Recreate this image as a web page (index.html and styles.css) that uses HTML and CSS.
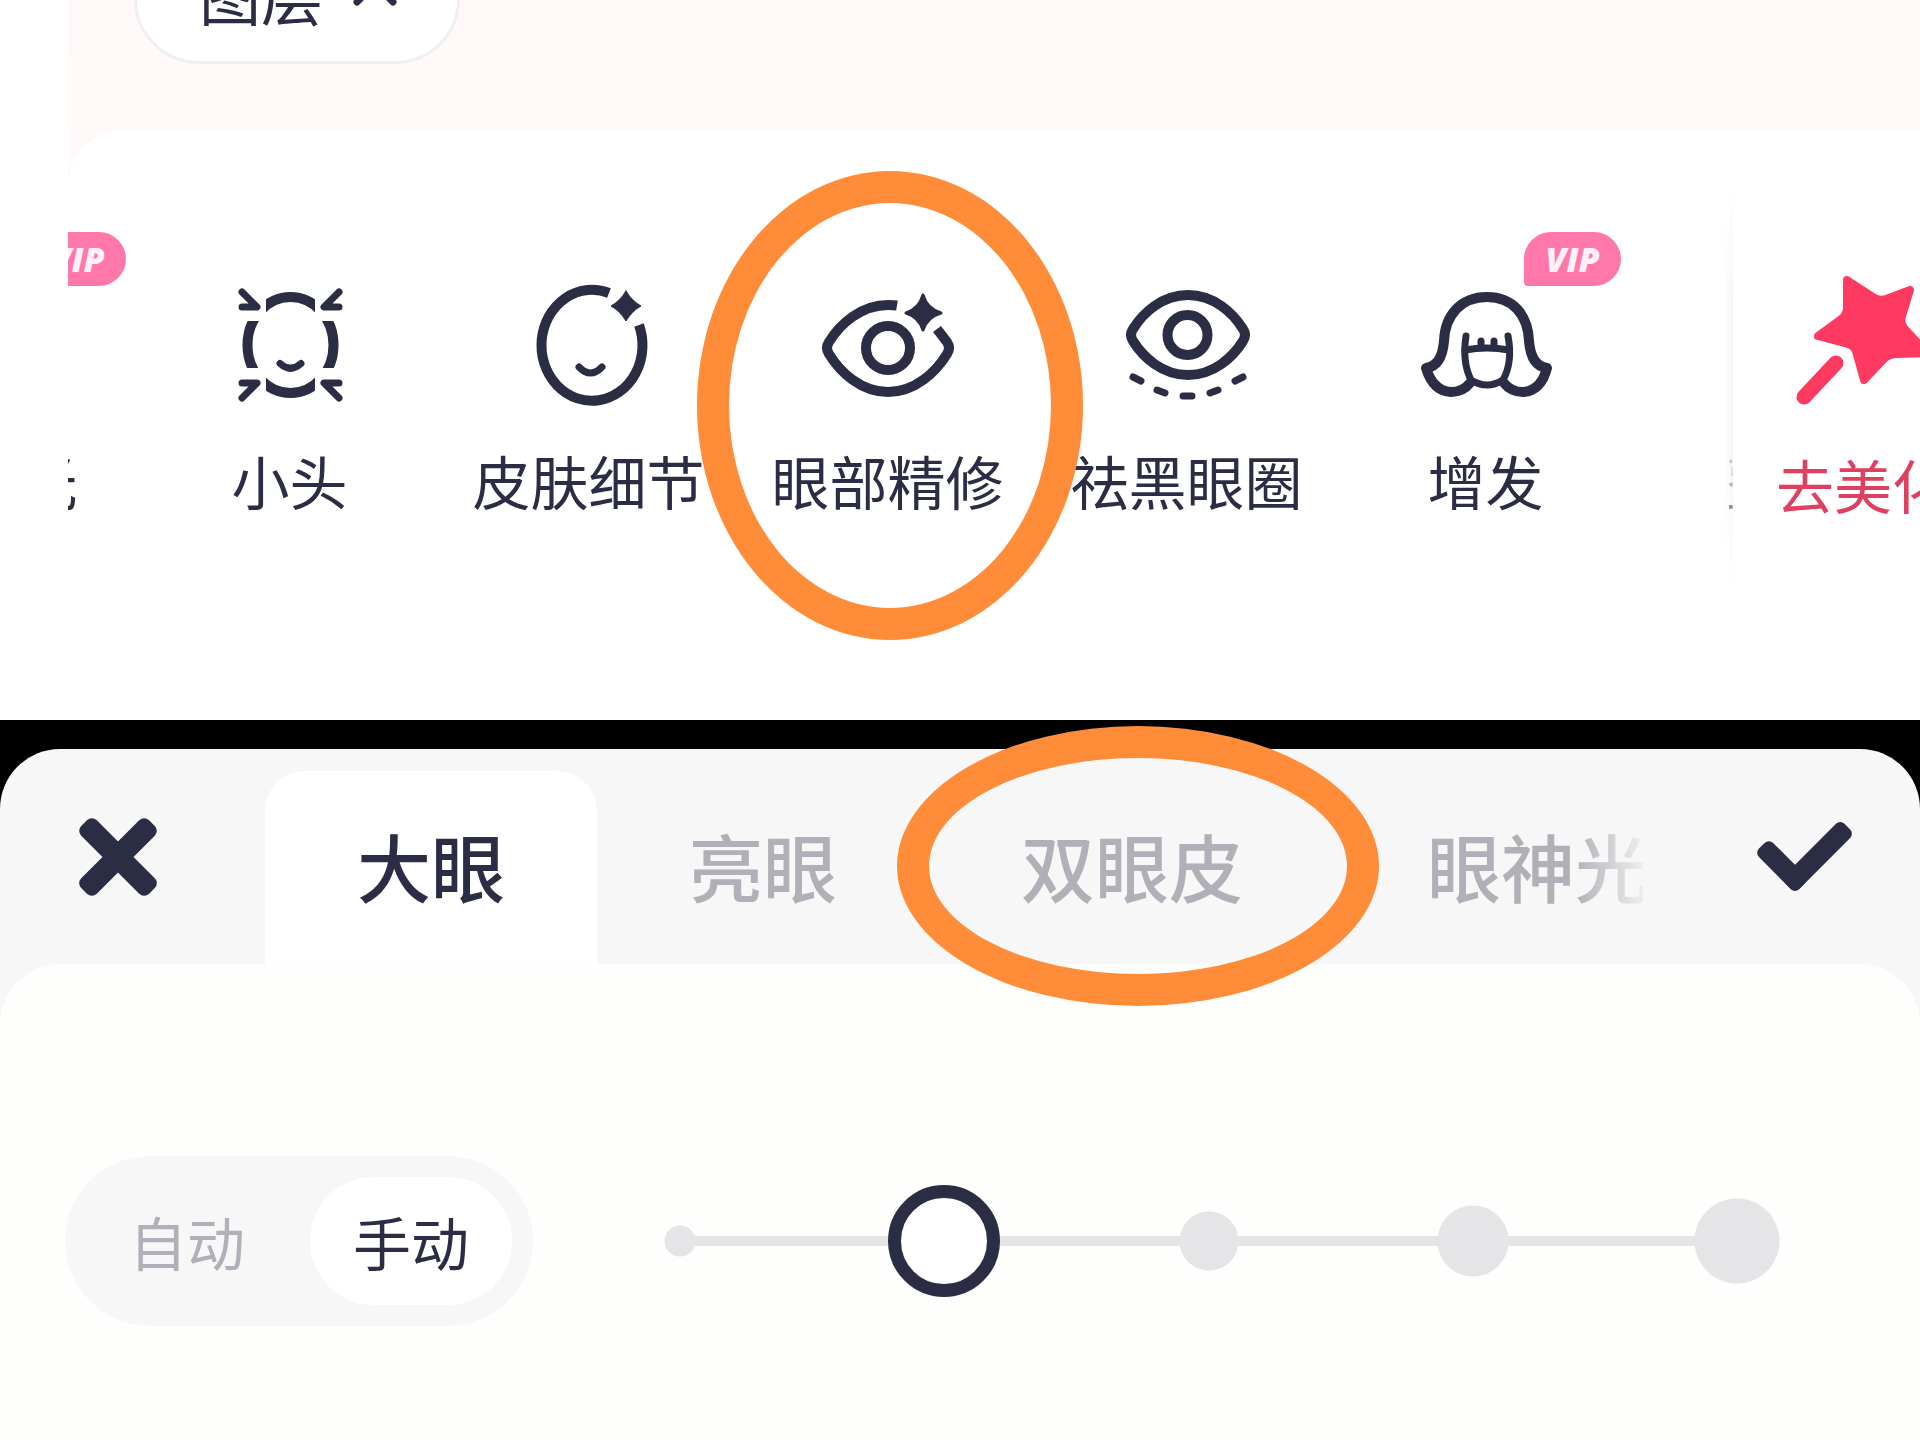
FILE: index.html
```html
<!DOCTYPE html>
<html lang="zh-CN">

<head>

    <meta charset="UTF-8">
    <meta name="viewport" content="width=device-width, initial-scale=1.0">
    <title>眼部精修</title>

    <link rel="stylesheet" href="styles.css">

</head>

<body>

    <section class="editor">
        <button class="layers" type="button">
            <span>图层</span>
            <svg width="44" height="24" viewBox="0 0 44 24"><path d="M4 20L22 2L40 20" /></svg>
        </button>

        <div class="toolbar">
            <div class="tools">
                <button class="tool" type="button">
                    <svg class="icon" viewBox="0 0 140 140"></svg>
                    <span>祛油光</span>
                    <em class="vip">VIP</em>
                </button>

                <button class="tool" type="button">
                    <svg class="icon" viewBox="0 0 140 140">
                        <clipPath id="faceGaps">
                            <rect x="46" y="0" width="49" height="140" />
                            <rect x="0" y="46" width="140" height="47" />
                        </clipPath>
                        <ellipse cx="70.5" cy="70" rx="43" ry="48" stroke-width="10" clip-path="url(#faceGaps)" />
                        <path d="M60 88.5Q70.5 98 81 88.5M22 17L37 32H22M119 17L104 32H119M22 123L37 108H22M119 123L104 108H119" stroke-width="7" />
                    </svg>
                    <span>小头</span>
                </button>

                <button class="tool" type="button">
                    <svg class="icon" viewBox="0 0 140 140">
                        <path class="butt" d="M120 50A50.5 55.5 0 1 1 90 18" stroke-width="10" />
                        <path d="M60 92Q71.5 104 83 92" stroke-width="7" />
                        <path class="solid" d="M107 16Q113 26 122 31Q113 36 107 46Q101 36 92 31Q101 26 107 16Z" stroke-width="1" />
                    </svg>
                    <span>皮肤细节</span>
                </button>

                <button class="tool" type="button">
                    <svg class="icon" viewBox="0 0 140 140">
                        <path class="butt" d="M79 30.5Q76 30 70 30C43 30 22 49 11 67Q7 73 11 79C22 97 43 117 70 117C97 117 118 97 129 79Q133 73 129 67L119 54" stroke-width="10" />
                        <circle cx="70" cy="73" r="22" stroke-width="10" />
                        <path class="solid" d="M105 20Q109 34 123 38Q109 42 105 55Q101 42 88 38Q101 34 105 20Z" stroke-width="3" />
                    </svg>
                    <span>眼部精修</span>
                    <i class="ring ring-tool"></i>
                </button>

                <button class="tool" type="button">
                    <svg class="icon" viewBox="0 0 140 140">
                        <path d="M71 20C97 20 116 38 126 54Q130 60 126 66C116 82 97 100 71 100C45 100 26 82 16 66Q12 60 16 54C26 38 45 20 71 20Z" stroke-width="10" />
                        <circle cx="70.5" cy="60" r="20" stroke-width="10" />
                        <path d="M16 102L24 106M40 115L48 118M66 121H75M93 118L101 115M118 106L126 102" stroke-width="7" />
                    </svg>
                    <span>祛黑眼圈</span>
                </button>

                <button class="tool" type="button">
                    <svg class="icon" viewBox="0 0 140 140">
                        <path d="M54 108Q47 117 35 117Q17 116 10 93Q26 91 28 66C29 40 45 22 71 22C97 22 112 40 113 66Q115 91 131 93Q125 116 107 117Q95 117 88 108" stroke-width="10" />
                        <path d="M50 61Q46 87 55 105Q71 115 87 105Q97 87 92 61" stroke-width="7" />
                        <path d="M49 75Q71 71 93 75M65 66V72M78 66V72" stroke-width="7" />
                    </svg>
                    <span>增发</span>
                    <em class="vip">VIP</em>
                </button>

                <button class="tool" type="button">
                    <svg class="icon" viewBox="0 0 140 140"></svg>
                    <span>整牙</span>
                </button>
            </div>

            <div class="pinned">
                <button class="tool tool-remove" type="button">
                    <svg class="icon" viewBox="0 0 140 140">
                        <path class="solid" d="M54 5L80 22Q86 26 93 24L117 15L109 41Q107 47 111 53L134 78L104 79Q95 79 90 85L71 105L63 76Q61 71 55 69L25 61L47 45Q54 40 54 33Z" stroke-width="8" />
                        <path d="M43 88L11 122" stroke-width="15" />
                    </svg>
                    <span>去美化</span>
                </button>
            </div>
        </div>
    </section>

    <section class="sheet">
        <header class="sheet-head">
            <button class="action action-close" type="button" aria-label="关闭">
                <svg width="100" height="100" viewBox="-50 -50 100 100">
                    <rect x="-11" y="-48" width="22" height="96" rx="7" transform="rotate(45)" />
                    <rect x="-11" y="-48" width="22" height="96" rx="7" transform="rotate(-45)" />
                </svg>
            </button>

            <div class="tabs" role="tablist">
                <button class="tab active" type="button" role="tab" aria-selected="true">大眼</button>
                <button class="tab" type="button" role="tab">亮眼</button>
                <button class="tab" type="button" role="tab">双眼皮<i class="ring ring-tab"></i></button>
                <button class="tab tab-fade" type="button" role="tab">眼神光</button>
            </div>

            <button class="action action-done" type="button" aria-label="完成">
                <svg width="100" height="100" viewBox="0 0 100 100">
                    <rect x="-10" y="-47" width="20" height="57" rx="6" transform="translate(40 72) rotate(-45)" />
                    <rect x="-10" y="-74" width="20" height="84" rx="6" transform="translate(40 72) rotate(45)" />
                </svg>
            </button>
        </header>

        <div class="panel">
            <div class="mode">
                <input type="radio" name="mode" id="modeAuto">
                <label for="modeAuto">自动</label>
                <input type="radio" name="mode" id="modeManual" checked>
                <label for="modeManual">手动</label>
            </div>

            <div class="size">
                <div class="stops">
                    <i class="stop-1"></i>
                    <i class="stop-2"></i>
                    <i class="stop-3"></i>
                    <i class="stop-4"></i>
                    <i class="stop-5"></i>
                </div>
                <input type="range" min="0" max="4" step="1" value="1" aria-label="画笔大小">
            </div>
        </div>
    </section>

</body>

</html>
```
FILE: styles.css
```css
:root {
    --ink: #2b2d45;
    --muted: #b0b1b8;
    --grey: #f7f7f7;
    --track: #e5e5e8;
    --orange: #ff8c39;
    --red: #ff3a60;
}

* {
    box-sizing: border-box;
}

body {
    margin: 0;
    min-height: 100vh;
    display: flex;
    flex-direction: column;
    overflow: hidden;
    background-color: #fff;
    color: var(--ink);
    font-family: "Noto Sans CJK SC", sans-serif;
}

button {
    margin: 0;
    padding: 0;
    border: 0;
    background: none;
    color: inherit;
    font: inherit;
}

svg {
    display: block;
    flex: none;
}

/* top: canvas strip and tools */

.editor {
    margin-left: 68px;
    height: 720px;
    display: flex;
    flex-direction: column;
    align-items: flex-start;
    overflow: hidden;
    background: linear-gradient(#fff8f8, #fffaf9 130px);
}

.layers {
    display: flex;
    align-items: center;
    gap: 30px;
    height: 130px;
    margin: -66px 0 66px 66px;
    padding: 0 60px 10px 62px;
    border: 3px solid #f1eff0;
    border-radius: 65px;
    background-color: #fff;
    font-size: 62px;
    line-height: 72px;
}

.layers svg {
    fill: none;
    stroke: var(--ink);
    stroke-width: 7px;
    stroke-linecap: round;
}

.toolbar {
    width: 100%;
    flex: 1;
    display: flex;
    background-color: #fff;
    border-top-left-radius: 56px;
}

.tools {
    flex: 1;
    min-width: 0;
    display: flex;
    overflow: hidden;
}

.tools .tool:first-child {
    margin-left: -227px;
}

.tool {
    position: relative;
    flex: none;
    width: 299px;
    padding-top: 145px;
    display: flex;
    flex-direction: column;
    align-items: center;
    gap: 29px;
    font-size: 58px;
    line-height: 72px;
    white-space: nowrap;
}

.icon {
    width: 140px;
    height: 140px;
    fill: none;
    stroke: var(--ink);
    stroke-linecap: round;
    stroke-linejoin: round;
}

.icon .butt {
    stroke-linecap: butt;
}

.icon .solid {
    fill: var(--ink);
}

.vip {
    position: absolute;
    top: 102px;
    left: 188px;
    width: 97px;
    height: 54px;
    border-radius: 27px 27px 27px 4px;
    background-color: #ff78a9;
    color: #fff0f8;
    font-family: "Open Sans", sans-serif;
    font-size: 34px;
    font-weight: 800;
    line-height: 54px;
    text-align: center;
}

.pinned {
    position: relative;
    flex: none;
    width: 187px;
}

.pinned:before {
    content: '';
    position: absolute;
    top: 50px;
    bottom: 130px;
    right: 100%;
    width: 8px;
    background: linear-gradient(to right, transparent, #f4f4f4);
    mask-image: linear-gradient(transparent, #000 30%, #000 70%, transparent);
}

.tool-remove {
    width: 260px;
    gap: 33px;
    color: #e0405f;
}

.tool-remove .icon {
    stroke: var(--red);
}

.tool-remove .icon .solid {
    fill: var(--red);
}

/* hand-drawn highlights over a tool or a tab */

.ring {
    position: absolute;
    z-index: 5;
    border: 32px solid var(--orange);
    border-radius: 50%;
    pointer-events: none;
}

.ring-tool {
    top: 41px;
    left: -41px;
    width: 386px;
    height: 469px;
}

.ring-tab {
    top: -45px;
    left: -32px;
    width: 482px;
    height: 280px;
}

.tool:has(.ring) {
    z-index: 2;
}

/* bottom: sheet */

.sheet {
    flex: 1;
    display: flex;
    flex-direction: column;
    padding-top: 29px;
    background-color: #000;
}

.sheet-head {
    position: relative;
    z-index: 2;
    display: flex;
    height: 215px;
    background-color: var(--grey);
    border-radius: 60px 60px 0 0;
}

.action {
    flex: none;
    display: flex;
    align-items: center;
    fill: var(--ink);
}

.action-close {
    width: 265px;
    padding-left: 68px;
}

.action-done {
    width: 277px;
    padding-right: 65px;
    justify-content: flex-end;
}

.tabs {
    flex: 1;
    min-width: 0;
    display: flex;
    align-items: flex-end;
    overflow-x: clip;
}

.tab {
    position: relative;
    flex: none;
    height: 193px;
    padding: 0 92px 6px;
    color: var(--muted);
    font-size: 74px;
    font-weight: 500;
    line-height: 96px;
}

.tab.active {
    color: var(--ink);
    background-color: #fff;
    border-radius: 40px 40px 0 0;
}

.tab-fade {
    mask-image: linear-gradient(to right, #000 240px, transparent 318px);
}

.panel {
    flex: 1;
    display: flex;
    align-items: flex-start;
    gap: 91px;
    padding: 192px 127px 114px 65px;
    background-color: #fefefc;
    border-radius: 60px 60px 0 0;
    box-shadow: 0 -60px 0 60px var(--grey);
    clip-path: inset(0);
}

.mode {
    flex: none;
    display: flex;
    gap: 22px;
    padding: 21px;
    border-radius: 85px;
    background-color: var(--grey);
}

.mode input {
    position: absolute;
    opacity: 0;
}

.mode label {
    padding: 0 43px;
    border-radius: 64px;
    color: var(--muted);
    font-size: 58px;
    line-height: 128px;
}

.mode input:checked + label {
    background-color: #fff;
    color: var(--ink);
}

.size {
    flex: 1;
    display: grid;
    align-items: center;
    height: 170px;
}

.stops,
.size input {
    grid-area: 1 / 1;
    margin: 0;
    width: 100%;
}

.stops {
    display: flex;
    align-items: center;
    justify-content: space-between;
    background: linear-gradient(var(--track), var(--track)) center / calc(100% - 112px) 10px no-repeat;
}

.stops i {
    width: 112px;
    height: 112px;
    background: radial-gradient(circle closest-side, var(--track) calc(var(--dot) - 1px), transparent var(--dot));
}

.stop-1 {
    --dot: 16px;
}

.stop-2 {
    --dot: 22px;
}

.stop-3 {
    --dot: 30px;
}

.stop-4 {
    --dot: 36px;
}

.stop-5 {
    --dot: 43px;
}

.size input {
    appearance: none;
    height: 112px;
    background: none;
}

.size input::-webkit-slider-thumb {
    appearance: none;
    width: 112px;
    height: 112px;
    border: 13px solid var(--ink);
    border-radius: 50%;
    background-color: #fff;
}
```
